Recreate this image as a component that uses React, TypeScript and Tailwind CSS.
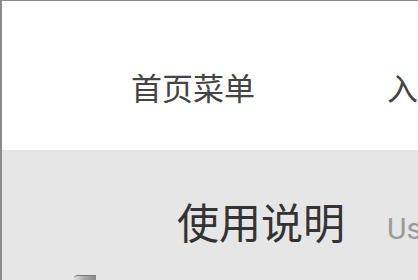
import React from "react";

export default function App() {
  return (
    <div className="w-[418px] h-[280px] overflow-hidden border-l-2 border-t border-[#8a8a8a] bg-white" style={{ fontFamily: '"Noto Sans CJK SC", "Noto Sans", sans-serif' }}>
      <header className="h-[149px] flex items-center pt-[22px] bg-white">
        <nav className="flex items-center gap-[132px] pl-[129px] whitespace-nowrap text-[31px] leading-none text-[#444]">
          <span>首页菜单</span>
          <span>入驻指南</span>
        </nav>
      </header>
      <section className="h-[131px] bg-[#e6e6e6] pl-[175px] pt-[50px]">
        <div className="flex items-baseline whitespace-nowrap">
          <h1 className="text-[42px] leading-none text-[#333]">使用说明</h1>
          <span className="ml-[42px] text-[30px] leading-none text-[#9a9a9a]" style={{ fontFamily: 'Roboto, "Noto Sans", sans-serif' }}>Use Instructions</span>
        </div>
        <div className="mt-[31px] -ml-[103px] w-[22px] h-[6px] bg-gradient-to-r from-[#e0e0e0] via-[#a8a8a8] to-[#8a8a8a] rounded-tl-[4px] border-t border-[#777]" />
      </section>
    </div>
  );
}
